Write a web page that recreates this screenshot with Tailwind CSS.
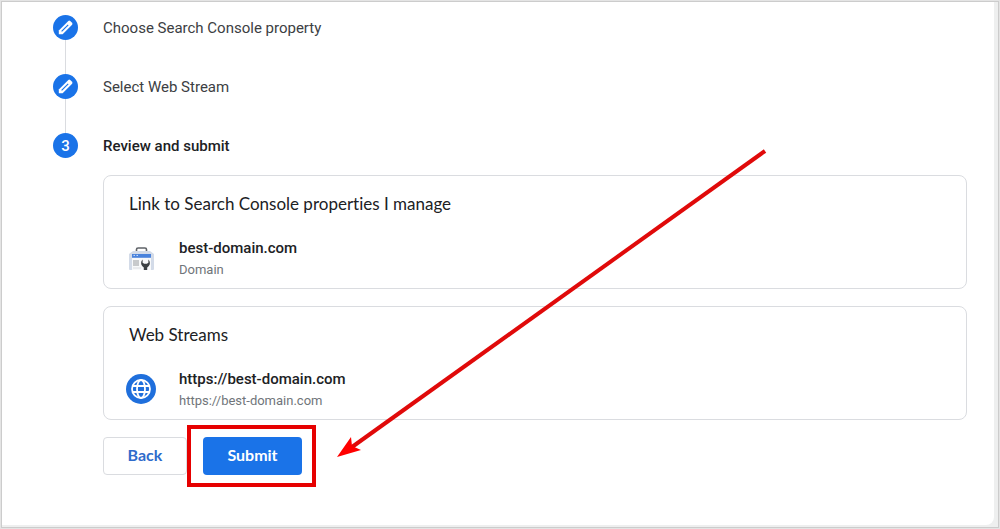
<!DOCTYPE html>
<html lang="en">
<head>
  <meta charset="UTF-8">
  <meta name="viewport" content="width=device-width, initial-scale=1.0">
  <title>Link Search Console</title>
  <script src="https://cdn.jsdelivr.net/npm/@tailwindcss/browser@4"></script>
</head>
<body class="min-h-screen flex bg-[#cccccc] border border-[#e4e4e4] p-px font-['Roboto',sans-serif] text-[#3c4043]">
  <div class="flex-1 flex bg-[#eeefef] pr-1 pb-[2px]">
    <main class="relative flex-1 bg-white rounded-br-lg pl-[51px] pr-[27px] pt-[13px]">
      <ol>
        <li class="flex gap-[25px] h-[59px]">
          <div class="flex flex-col items-center">
            <button type="button" aria-label="Edit property" class="w-[25px] h-[25px] shrink-0 rounded-full bg-[#1a73e8] flex items-center justify-center">
              <svg class="w-[15px] h-[15px]" viewBox="0 0 15 15" fill="none" aria-hidden="true">
                <path d="M.8 14.2V10.4L10.3 .9Q11.3 .2 12.2 .9L14.1 2.8Q14.8 3.7 14.1 4.7L4.6 14.2Z" fill="#fff"/>
                <path d="M3.6 11.4L10.2 4.8" stroke="#1a73e8" stroke-width="1.2"/>
              </svg>
            </button>
            <span class="w-px flex-1 bg-[#dadce0]"></span>
          </div>
          <h2 class="text-[15px] leading-[26px]">Choose Search Console property</h2>
        </li>
        <li class="flex gap-[25px] h-[59px]">
          <div class="flex flex-col items-center">
            <button type="button" aria-label="Edit web stream" class="w-[25px] h-[25px] shrink-0 rounded-full bg-[#1a73e8] flex items-center justify-center">
              <svg class="w-[15px] h-[15px]" viewBox="0 0 15 15" fill="none" aria-hidden="true">
                <path d="M.8 14.2V10.4L10.3 .9Q11.3 .2 12.2 .9L14.1 2.8Q14.8 3.7 14.1 4.7L4.6 14.2Z" fill="#fff"/>
                <path d="M3.6 11.4L10.2 4.8" stroke="#1a73e8" stroke-width="1.2"/>
              </svg>
            </button>
            <span class="w-px flex-1 bg-[#dadce0]"></span>
          </div>
          <h2 class="text-[15px] leading-[26px]">Select Web Stream</h2>
        </li>
        <li class="flex gap-[25px]">
          <span class="w-[25px] h-[25px] shrink-0 rounded-full bg-[#1a73e8] text-white text-[15px] leading-[26px] font-medium text-center">3</span>
          <div class="flex-1">
            <h2 class="text-[15px] leading-[26px] font-medium text-[#202124]">Review and submit</h2>

            <section class="mt-4 border border-[#dadce0] rounded-lg px-[25px] pt-4 pb-2">
              <h3 class="font-['Lato',sans-serif] [font-variant-ligatures:none] text-[17px] leading-6 text-[#202124]">Link to Search Console properties I manage</h3>
              <div class="mt-5 flex items-center">
                <svg class="w-[26px] h-[26px] mr-6" viewBox="0 0 26 26" aria-hidden="true">
                  <path d="M7.500 6V4.600Q7.500 3 9.100 3H15.900Q17.500 3 17.500 4.600V6" fill="none" stroke="#5f6368" stroke-width="1.600"/>
                  <path d="M4 6H21L25 9V24Q25 25 24 25H1Q0 25 0 24V9Z" fill="#d3dbe8"/>
                  <path d="M3 9H22V25H3Z" fill="#f8f9fa"/>
                  <path d="M3 9H22V12.800H3Z" fill="#4a83dc"/>
                  <path d="M4.500 10.400H6M7.500 10.400H9" stroke="#d2e3fc"/>
                  <path d="M4 15H10V21H4Z" fill="#c8cacc"/>
                  <path d="M4 23H12" stroke="#dadce0"/>
                  <path d="M13.600 14.600A4.700 4.700 0 0 0 13.400 21.300L14.800 22.600V25H18.200V22.600L19.600 21.300A4.700 4.700 0 0 0 19.400 14.600V17.700L17.800 18.700H15.200L13.600 17.700Z" fill="#3c4043"/>
                </svg>
                <div>
                  <p class="text-[15px] leading-6 font-medium text-[#202124]">best-domain.com</p>
                  <p class="text-[13px] leading-5 text-[#70757a]">Domain</p>
                </div>
              </div>
            </section>

            <section class="mt-[17px] border border-[#dadce0] rounded-lg px-[25px] pt-4 pb-2">
              <h3 class="font-['Lato',sans-serif] [font-variant-ligatures:none] text-[17px] leading-6 text-[#202124]">Web Streams</h3>
              <div class="mt-5 flex items-center">
                <svg class="w-[30px] h-[30px] -ml-[3px] mr-[23px]" viewBox="0 0 30 30" fill="none" aria-hidden="true">
                  <circle cx="15" cy="15" r="15" fill="#1f6fdc"/>
                  <g stroke="#fff" stroke-width="1.800">
                    <circle cx="15" cy="15" r="9"/>
                    <ellipse cx="15" cy="15" rx="4" ry="9"/>
                    <path d="M7 12H23M7 18H23"/>
                  </g>
                </svg>
                <div>
                  <p class="text-[15px] leading-6 font-medium text-[#202124]">https://best-domain.com</p>
                  <p class="text-[13px] leading-5 text-[#70757a]">https://best-domain.com</p>
                </div>
              </div>
            </section>

            <div class="mt-[17px] flex gap-4 font-['Lato',sans-serif] text-base font-bold">
              <button type="button" class="w-[84px] h-[38px] pb-[2px] rounded border border-[#dadce0] text-[#2f6bcb]">Back</button>
              <div class="relative">
                <button type="submit" class="w-[99px] h-[38px] pb-[2px] rounded bg-[#1a73e8] text-white">Submit</button>
                <span class="absolute -left-4 -right-[14px] -top-3 -bottom-3 border-4 border-[#e60000] pointer-events-none"></span>
              </div>
            </div>
          </div>
        </li>
      </ol>

      <svg class="absolute left-[334px] top-[146px] w-[432px] h-[312px] pointer-events-none" viewBox="336 148 432 312" aria-hidden="true">
        <path d="M765 151L352 447" stroke="#e00a0a" stroke-width="4"/>
        <path d="M337 457L351 437L352 446L361 450Z" fill="#f00"/>
      </svg>
    </main>
  </div>
</body>
</html>
